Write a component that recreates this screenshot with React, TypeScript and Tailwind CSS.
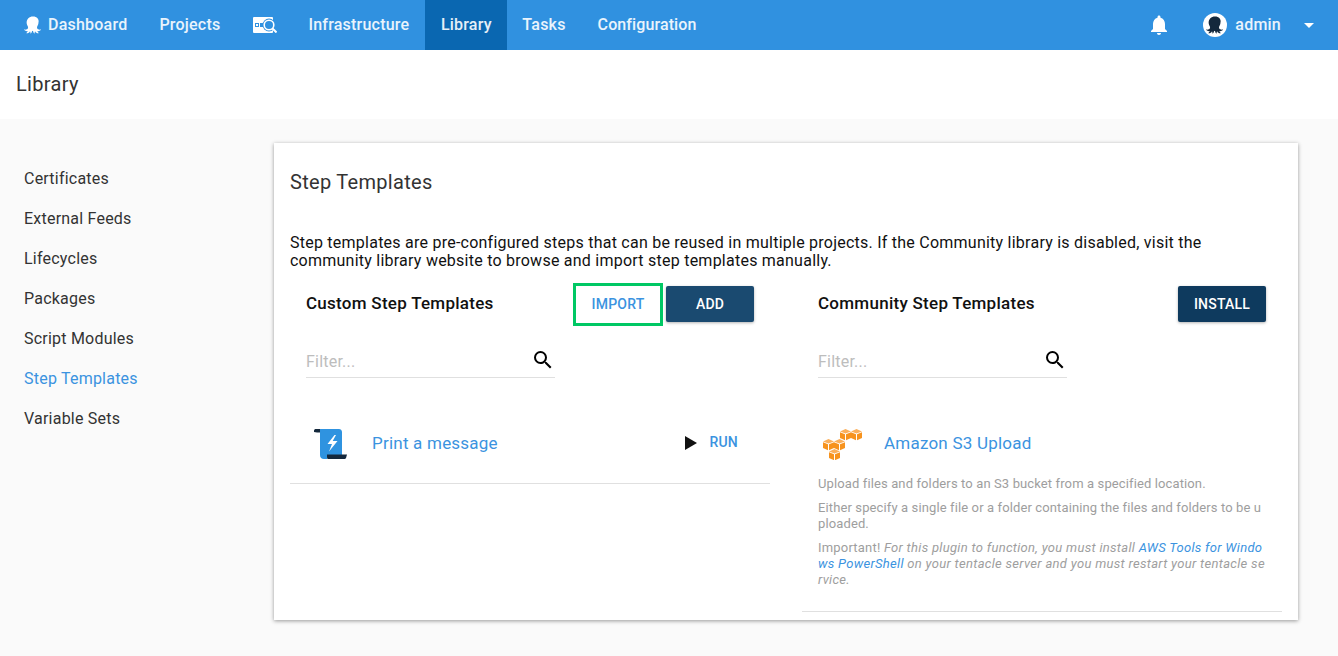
const sideLinks = ["Certificates", "External Feeds", "Lifecycles", "Packages", "Script Modules", "Step Templates", "Variable Sets"];

function Octopus({ className, fill }: { className: string; fill: string }) {
  return (
    <svg viewBox="0 0 24 24" className={className} fill={fill}>
      <path d="M12 0.500C6.800 0.500 3.500 4 3.500 8.800c0 2.500 1 4 1.800 5.500.5 1.400-.3 2.900-1.400 3.500-1 .5-2.200.6-3.300.3-.4-.1-.6.3-.3.6 1.200 1.200 3 1.800 4.700 1.400-.3 1-.9 1.800-1.800 2.400-.2.200 0 .6.300.6 2.100 0 3.700-1.100 4.500-2.900.5 1 .7 1.900.6 2.800 0 .3.300.4.500.2 1.100-1 1.700-2.200 1.700-3.600.3.400 1 .4 1.200 0 0 1.400.6 2.600 1.700 3.600.2.200.5.100.5-.2-.1-.9.1-1.800.6-2.800.8 1.800 2.400 2.900 4.500 2.900.3 0 .5-.4.3-.6-.9-.6-1.500-1.400-1.800-2.400 1.700.4 3.500-.2 4.700-1.400.3-.3.100-.7-.3-.6-1.100.3-2.300.2-3.300-.3-1.100-.6-1.900-2.100-1.400-3.500.8-1.500 1.800-3 1.800-5.500C20.500 4 17.200 0.500 12 0.500z" />
    </svg>
  );
}

function ScrollIcon() {
  return (
    <svg viewBox="0 0 34 34" className="h-[34px] w-[34px]">
      <path d="M0 3.500C0 2.500 1 2 2 2h8v3.500H6C4 5.500 2 5.500 0 5z" fill="#14283c" />
      <path d="M6 2h19c1.500 0 3 1 3 3v23H13v2.500c0 1 .5 1.500 1 1.500H10c-2.500 0-4-1.500-4-4z" fill="#2f93e0" />
      <path d="M13 27.500h20l-1 3.500c-.3.700-1 1-2 1H14c-1 0-1-1.500-1-3z" fill="#14283c" />
      <path d="M20.500 8l-7 9h4.500L15 24.500 23.500 14h-4.800L22 8z" fill="#fff" />
    </svg>
  );
}

function Cube({ x, y }: { x: number; y: number }) {
  return (
    <g transform={`translate(${x} ${y})`}>
      <path d="M0 2.500L5.500 0 11 2.500 5.500 4.500z" fill="#fbb05c" />
      <path d="M0 3.200v5.800L5 11.200V5.200z" fill="#f7931e" />
      <path d="M11 3.200v5.800L6 11.200V5.200z" fill="#f7931e" />
    </g>
  );
}

function AwsIcon() {
  return (
    <svg viewBox="0 0 44 32" className="h-8 w-11">
      <Cube x={22} y={1} />
      <Cube x={33} y={1} />
      <Cube x={5} y={11} />
      <Cube x={16} y={11} />
      <Cube x={11} y={21} />
    </svg>
  );
}

function Filter() {
  return (
    <div className="flex h-[40px] w-[249px] items-center justify-between border-b border-[#e0e0e0] pt-[8px]">
      <span className="text-[16px] text-[#bdbdbd]">Filter...</span>
      <svg viewBox="0 0 24 24" className="mb-[4px] h-6 w-6" fill="#000">
        <path d="M15.500 14h-.79l-.28-.27A6.471 6.471 0 0 0 16 9.500 6.500 6.500 0 1 0 9.500 16c1.610 0 3.090-.59 4.230-1.570l.27.28v.79l5 4.990L20.490 19l-4.990-5zm-6 0C7.010 14 5 11.990 5 9.500S7.010 5 9.500 5 14 7.010 14 9.500 11.990 14 9.500 14z" />
      </svg>
    </div>
  );
}

export default function App() {
  return (
    <div className="min-h-[656px] bg-[#fafafa] font-['Roboto',sans-serif] tracking-[0.22px] text-[#333]">
      <nav className="flex h-[50px] items-stretch bg-[#3091e0] text-[16px] font-medium text-white/90">
        <div className="flex items-center pl-6 pr-4">
          <Octopus className="mr-[6px] h-[18px] w-[18px]" fill="#fff" />
          Dashboard
        </div>
        <div className="flex items-center px-4">Projects</div>
        <div className="flex items-center pl-[17px] pr-[15px]">
          <svg viewBox="0 0 24 16" className="h-4 w-6">
            <rect x="0" y="0" width="20" height="16" rx="1" fill="#fff" />
            <rect x="2" y="6" width="4" height="4" fill="#3091e0" />
            <rect x="3" y="7" width="2" height="2" fill="#fff" />
            <rect x="7" y="6" width="3" height="4" fill="#3091e0" />
            <circle cx="16" cy="8" r="6.500" fill="#3091e0" />
            <circle cx="16" cy="8" r="4.800" fill="#3091e0" stroke="#fff" strokeWidth="1.600" />
            <path d="M19.500 11.500L23.500 15.500" stroke="#fff" strokeWidth="2" />
          </svg>
        </div>
        <div className="flex items-center px-4">Infrastructure</div>
        <div className="flex w-[82px] items-center justify-center bg-[#0a67b1]">Library</div>
        <div className="flex items-center pl-[15px] pr-4">Tasks</div>
        <div className="flex items-center px-4 tracking-[0.1px]">Configuration</div>
        <div className="ml-auto flex items-center">
          <svg viewBox="0 0 24 24" className="h-6 w-6" fill="#fff">
            <path d="M12 22c1.100 0 2-.9 2-2h-4c0 1.100.89 2 2 2zm6-6v-5c0-3.070-1.640-5.640-4.500-6.320V4c0-.83-.67-1.500-1.500-1.500s-1.500.67-1.500 1.500v.68C7.630 5.360 6 7.920 6 11v5l-2 2v1h16v-1l-2-2z" />
          </svg>
          <div className="ml-[32px] flex h-6 w-6 items-center justify-center rounded-full bg-white">
            <Octopus className="h-[18px] w-[18px]" fill="#14283c" />
          </div>
          <span className="ml-2">admin</span>
          <div className="ml-[23px] mr-[24px] h-0 w-0 border-x-[5px] border-t-[5px] border-x-transparent border-t-white" />
        </div>
      </nav>

      <header className="flex h-[69px] items-center bg-white px-4 pb-[2px] text-[20px] tracking-[0.3px]">Library</header>

      <main className="flex pt-6 pr-10 pb-9">
        <aside className="w-[274px] shrink-0 pl-6 pt-[16px]">
          {sideLinks.map((l) => (
            <div key={l} className={`flex h-10 items-center text-[16px] ${l === "Step Templates" ? "text-[#3b93e0]" : "text-[#333]"}`}>
              {l}
            </div>
          ))}
        </aside>

        <section className="h-[477px] w-[1024px] bg-white px-4 pt-[25px] shadow-[0_1px_4px_rgba(0,0,0,0.4)]">
          <h2 className="text-[20px] leading-[28px] tracking-[0.3px]">Step Templates</h2>
          <p className="mt-[38px] text-[16px] leading-[18px] tracking-[0.24px] text-[#111]">
            Step templates are pre-configured steps that can be reused in multiple projects. If the Community library is disabled, visit the community library website to browse and import step templates manually.
          </p>

          <div className="mt-[13px] grid grid-cols-[480px_480px] gap-x-8">
            <div>
              <div className="flex h-[43px] items-center pl-4 pr-4">
                <h3 className="pb-[2px] text-[17px] font-medium tracking-[0.27px] text-[#111]">Custom Step Templates</h3>
                <div className="ml-auto flex h-[43px] w-[90px] items-center justify-center border-[3px] border-[#00c864] text-[14px] font-medium text-[#3b93e0]">IMPORT</div>
                <div className="-mt-[1px] ml-[3px] flex h-9 w-[88px] items-center justify-center rounded-[2px] bg-[#1a4a70] text-[14px] font-medium text-white shadow-[0_1px_3px_rgba(0,0,0,0.3)]">ADD</div>
              </div>
              <div className="mt-[12px] pl-4"><Filter /></div>
              <div className="mt-[26px] flex h-[80px] items-center border-b border-[#e0e0e0] pl-6 pr-8">
                <ScrollIcon />
                <span className="ml-6 text-[17px] text-[#3b93e0]">Print a message</span>
                <div className="ml-auto flex items-center pb-[2px] text-[14px] font-medium text-[#3b93e0]">
                  <span className="mr-[12px] h-0 w-0 border-y-[7px] border-l-[12px] border-y-transparent border-l-[#111]" />
                  RUN
                </div>
              </div>
            </div>

            <div>
              <div className="flex h-[43px] items-center pl-4 pr-4">
                <h3 className="pb-[2px] text-[17px] font-medium tracking-[0.27px] text-[#111]">Community Step Templates</h3>
                <div className="-mt-[1px] ml-auto flex h-9 w-[88px] items-center justify-center rounded-[2px] bg-[#0e3a5e] text-[14px] font-medium text-white shadow-[0_1px_3px_rgba(0,0,0,0.3)]">INSTALL</div>
              </div>
              <div className="mt-[12px] pl-4"><Filter /></div>
              <div className="mt-[26px] border-b border-[#e0e0e0] px-4 pb-[23px]">
                <div className="flex h-[72px] items-center pt-[7px]">
                  <AwsIcon />
                  <span className="ml-[22px] text-[17px] text-[#3b93e0]">Amazon S3 Upload</span>
                </div>
                <div className="break-all text-[13px] leading-4 tracking-[0.12px] text-[#9e9e9e]">
                  <p>Upload files and folders to an S3 bucket from a specified location.</p>
                  <p className="mt-2">Either specify a single file or a folder containing the files and folders to be uploaded.</p>
                  <p className="mt-2 tracking-[0.2px]">
                    Important! <em className="tracking-[0.3px]">For this plugin to function, you must install <span className="text-[#3b93e0]">AWS Tools for Windows PowerShell</span> on your tentacle server and you must restart your tentacle service.</em>
                  </p>
                </div>
              </div>
            </div>
          </div>
        </section>
      </main>
    </div>
  );
}
